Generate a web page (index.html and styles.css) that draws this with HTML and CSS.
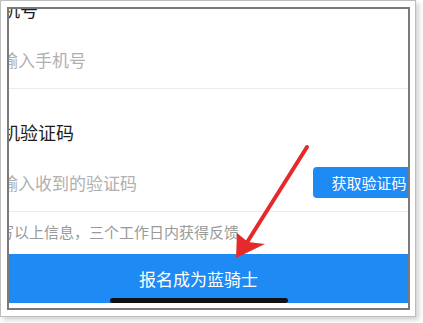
FILE: index.html
```html
<!DOCTYPE html>
<html lang="zh-CN">
<head>
    <meta charset="UTF-8">
    <meta name="viewport" content="width=device-width, initial-scale=1.0">
    <title>报名成为蓝骑士</title>
    <link rel="stylesheet" href="styles.css">
</head>
<body>
    <div class="shot">
        <div class="phone">
            <div class="form">
                <div class="field first">
                    <div class="label">手机号</div>
                    <div class="input-row">
                        <span class="placeholder">请输入手机号</span>
                    </div>
                </div>

                <div class="field">
                    <div class="label">手机验证码</div>
                    <div class="input-row">
                        <span class="placeholder">请输入收到的验证码</span>
                        <button class="code-btn">获取验证码</button>
                    </div>
                </div>

                <p class="hint">填写以上信息，三个工作日内获得反馈</p>

                <div class="submit">报名成为蓝骑士</div>
            </div>
            <div class="home-bar"></div>
        </div>
    </div>

    <!-- 红色箭头标注 -->
    <svg class="arrow" width="423" height="323" viewBox="0 0 423 323">
        <line x1="307" y1="147" x2="246" y2="244" stroke="#e42a2a" stroke-width="4" stroke-linecap="round"/>
        <polygon points="236,258 237,233 248,242 265,244" fill="#e42a2a"/>
    </svg>
</body>
</html>
```

FILE: styles.css
```css
body {
    margin: 0;
    background-color: #fff;
    font-family: "Noto Sans CJK SC", "Noto Sans", sans-serif;
    position: relative;
    width: 423px;
    height: 323px;
    overflow: hidden;
}

.shot {
    width: 403px;
    padding: 6px 5px 6px 6px;
    border: 1px solid #bdbdbd;
    box-shadow: 3px 3px 5px rgba(0, 0, 0, 0.18);
}

.phone {
    position: relative;
    height: 299px;
    border: 2px solid #7a7a7a;
    background-color: #fff;
    overflow: hidden;
}

.form {
    margin-left: -25px;
    width: 437px;
}

.field {
    padding-bottom: 6px;
    border-bottom: 1px solid #ececec;
}

.field + .field {
    margin-top: 31px;
}

.first .label {
    margin-top: -12px;
}

.label {
    font-size: 18px;
    line-height: 24px;
    color: #1c1c1c;
    margin-bottom: 15px;
}

.input-row {
    display: flex;
    align-items: center;
    justify-content: space-between;
    height: 46px;
}

.placeholder {
    font-size: 17px;
    color: #b0b0b0;
}

.code-btn {
    width: 108px;
    height: 31px;
    padding: 0 0 0 4px;
    border: none;
    border-radius: 4px;
    background-color: #1e8af4;
    color: #fff;
    font-family: inherit;
    font-size: 15px;
}

.hint {
    margin: 10px 0 0 0;
    font-size: 15px;
    line-height: 20px;
    color: #9a9a9a;
}

.submit {
    margin: 12px 8px 0 0;
    height: 49px;
    line-height: 49px;
    text-align: center;
    background-color: #1e8af4;
    color: #fff;
    font-size: 17px;
}

.home-bar {
    position: absolute;
    left: 101px;
    top: 289px;
    width: 178px;
    height: 5px;
    border-radius: 3px;
    background-color: #111;
}

.arrow {
    position: absolute;
    top: 0;
    left: 0;
    pointer-events: none;
}
```
